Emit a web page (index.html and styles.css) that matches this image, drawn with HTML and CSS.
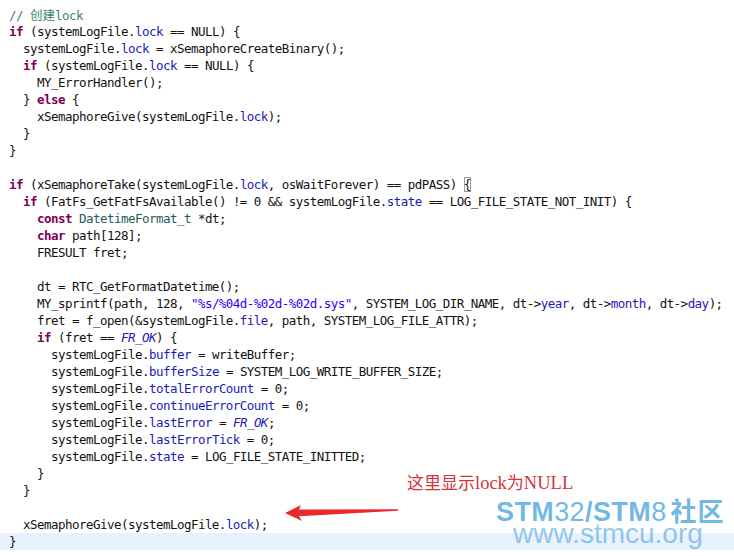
FILE: index.html
```html
<!DOCTYPE html>
<html lang="zh">
<head>
<meta charset="utf-8">
<title>systemLogFile lock</title>
<link rel="stylesheet" href="styles.css">
</head>
<body>
<div class="editor">
  <div class="code">
    <div class="ln"><span class="cm">// <span class="cjk">创建</span>lock</span></div>
    <div class="ln"><span class="kw">if</span> (systemLogFile.<span class="fd">lock</span> == NULL) {</div>
    <div class="ln">  systemLogFile.<span class="fd">lock</span> = xSemaphoreCreateBinary();</div>
    <div class="ln">  <span class="kw">if</span> (systemLogFile.<span class="fd">lock</span> == NULL) {</div>
    <div class="ln">    MY_ErrorHandler();</div>
    <div class="ln">  } <span class="kw">else</span> {</div>
    <div class="ln">    xSemaphoreGive(systemLogFile.<span class="fd">lock</span>);</div>
    <div class="ln">  }</div>
    <div class="ln">}</div>
    <div class="ln"> </div>
    <div class="ln"><span class="kw">if</span> (xSemaphoreTake(systemLogFile.<span class="fd">lock</span>, osWaitForever) == pdPASS) <span class="match">{</span></div>
    <div class="ln">  <span class="kw">if</span> (FatFs_GetFatFsAvailable() != 0 &amp;&amp; systemLogFile.<span class="fd">state</span> == LOG_FILE_STATE_NOT_INIT) {</div>
    <div class="ln">    <span class="kw">const</span> <span class="ty">DatetimeFormat_t</span> *dt;</div>
    <div class="ln">    <span class="kw">char</span> path[128];</div>
    <div class="ln">    FRESULT fret;</div>
    <div class="ln"> </div>
    <div class="ln">    dt = RTC_GetFormatDatetime();</div>
    <div class="ln">    MY_sprintf(path, 128, <span class="st">"%s/%04d-%02d-%02d.sys"</span>, SYSTEM_LOG_DIR_NAME, dt-&gt;<span class="fd">year</span>, dt-&gt;<span class="fd">month</span>, dt-&gt;<span class="fd">day</span>);</div>
    <div class="ln">    fret = f_open(&amp;systemLogFile.<span class="fd">file</span>, path, SYSTEM_LOG_FILE_ATTR);</div>
    <div class="ln">    <span class="kw">if</span> (fret == <span class="en">FR_OK</span>) {</div>
    <div class="ln">      systemLogFile.<span class="fd">buffer</span> = writeBuffer;</div>
    <div class="ln">      systemLogFile.<span class="fd">bufferSize</span> = SYSTEM_LOG_WRITE_BUFFER_SIZE;</div>
    <div class="ln">      systemLogFile.<span class="fd">totalErrorCount</span> = 0;</div>
    <div class="ln">      systemLogFile.<span class="fd">continueErrorCount</span> = 0;</div>
    <div class="ln">      systemLogFile.<span class="fd">lastError</span> = <span class="en">FR_OK</span>;</div>
    <div class="ln">      systemLogFile.<span class="fd">lastErrorTick</span> = 0;</div>
    <div class="ln">      systemLogFile.<span class="fd">state</span> = LOG_FILE_STATE_INITTED;</div>
    <div class="ln">    }</div>
    <div class="ln">  }</div>
    <div class="ln"> </div>
    <div class="ln">  xSemaphoreGive(systemLogFile.<span class="fd">lock</span>);</div>
    <div class="ln cur">}</div>
  </div>

  <svg class="arrow" width="120" height="24" viewBox="280 502 120 24" xmlns="http://www.w3.org/2000/svg">
    <polygon points="285,513 301,505 299,509.5 398,509.3 398,510.8 299,516.2 302,521" fill="#e82a2e"/>
  </svg>

  <div class="note">这里显示<span class="lat">lock</span>为<span class="lat">NULL</span></div>

  <div class="mark">
    <div class="mark-top"><b>STM</b>32<b>/STM</b>8<b class="mk-cjk">社区</b></div>
    <div class="mark-url">www.stmcu.org</div>
  </div>
</div>
</body>
</html>
```

FILE: styles.css
```css
html, body {
  margin: 0;
  padding: 0;
  background: #ffffff;
}

.editor {
  position: relative;
  width: 734px;
  height: 556px;
  overflow: hidden;
  background: #ffffff;
}

.code {
  padding-top: 6px;
  font-family: "DejaVu Sans Mono", "Noto Sans CJK SC", monospace;
  font-size: 12.5px;
  letter-spacing: -0.53px;
  line-height: 17px;
  color: #111111;
}

.ln {
  height: 17px;
  padding-left: 9px;
  white-space: pre;
}

.ln.cur {
  background: #e8f2fe;
}

.kw {
  color: #7f0055;
  font-weight: bold;
}

.fd {
  color: #1a1ab8;
}

.cm {
  color: #3f7f6f;
}

.cjk {
  font-family: "Noto Sans CJK SC", sans-serif;
  letter-spacing: 0;
}

.st {
  color: #2a00ff;
}

.ty {
  color: #1f5a5a;
}

.en {
  color: #1a1ab8;
  font-style: italic;
}

.match {
  outline: 1px solid #9a9a9a;
  outline-offset: -1px;
}

.arrow {
  position: absolute;
  left: 280px;
  top: 502px;
}

.note {
  position: absolute;
  left: 407px;
  top: 472px;
  font-family: "Noto Sans CJK SC", sans-serif;
  font-size: 17px;
  line-height: 20px;
  color: #d8323a;
}

.note .lat {
  font-family: "Liberation Serif", serif;
  font-size: 18.5px;
}

.mark {
  position: absolute;
  left: 496px;
  top: 498px;
  display: flex;
  flex-direction: column;
  font-family: "Liberation Sans", Arial, sans-serif;
  color: rgba(75, 165, 224, 0.78);
}

.mark-top {
  font-size: 27px;
  line-height: 24px;
  height: 24px;
  white-space: nowrap;
  font-weight: normal;
  letter-spacing: 0.4px;
}

.mark-top b {
  font-weight: bold;
}

.mark-top .mk-cjk {
  font-family: "Noto Sans CJK SC", sans-serif;
  font-size: 26px;
  margin-left: 4px;
  letter-spacing: 1px;
}

.mark-url {
  font-size: 28px;
  line-height: 24px;
  height: 24px;
  margin-left: 17px;
  color: rgba(100, 175, 228, 0.7);
  white-space: nowrap;
}
```
